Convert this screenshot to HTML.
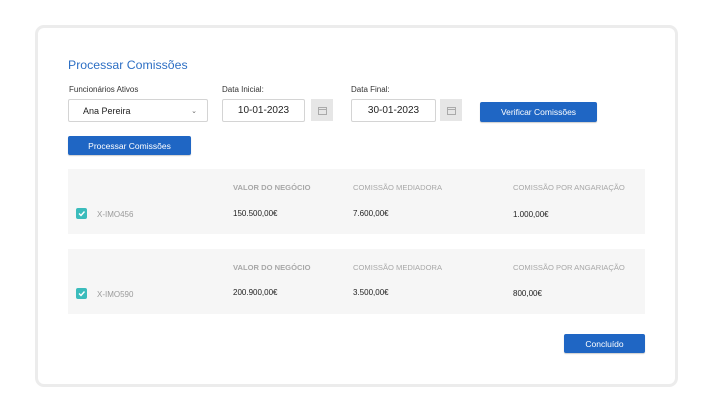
<html><head><style>
*{margin:0;padding:0;box-sizing:border-box}
body{width:713px;height:417px;background:#fff;font-family:"Liberation Sans",sans-serif;position:relative;overflow:hidden}
.a{position:absolute}
.card{left:35px;top:25px;width:643px;height:362px;border:3px solid #ececec;border-radius:9px}
.lbl{font-size:8px;color:#333}
.inp{background:#fff;border:1px solid #d4d4d4;border-radius:2px;font-size:10px;color:#222;display:flex;align-items:center}
.ic{background:#e6e6e6;display:flex;align-items:center;justify-content:center}
.btn{background:#1f66c4;color:#fff;font-size:8.5px;border-radius:2px;display:flex;align-items:center;justify-content:center;box-shadow:0 1px 1px rgba(0,0,0,.2)}
.row{background:#f6f6f6;left:68px;width:577px;height:65px}
.h{font-size:7.6px;color:#a8a8a8}
.v{font-size:8px;color:#222}
.cb{width:11px;height:11px;background:#3bbcbc;border-radius:2px}
.id{font-size:8px;color:#9a9a9a}
</style></head><body>
<div class="a card"></div>
<div class="a" style="left:68px;top:58px;font-size:12.3px;color:#2d6fc4">Processar Comissões</div>
<div class="a lbl" style="left:69px;top:85px">Funcionários Ativos</div>
<div class="a lbl" style="left:222px;top:85px">Data Inicial:</div>
<div class="a lbl" style="left:351px;top:85px">Data Final:</div>
<div class="a inp" style="left:68px;top:99px;width:140px;height:23px;padding-left:14px;font-size:9px">Ana Pereira<span style="position:absolute;right:10px;font-size:7px;color:#666">⌄</span></div>
<div class="a inp" style="left:222px;top:99px;width:83px;height:23px;justify-content:center">10-01-2023</div>
<div class="a ic" style="left:311px;top:99px;width:22px;height:22px"><svg width="9" height="9" viewBox="0 0 9 9"><rect x=".5" y="1.5" width="8" height="7" fill="none" stroke="#aaa"/><line x1="1" y1="3.5" x2="8" y2="3.5" stroke="#aaa"/></svg></div>
<div class="a inp" style="left:351px;top:99px;width:85px;height:23px;justify-content:center">30-01-2023</div>
<div class="a ic" style="left:440px;top:99px;width:22px;height:22px"><svg width="9" height="9" viewBox="0 0 9 9"><rect x=".5" y="1.5" width="8" height="7" fill="none" stroke="#aaa"/><line x1="1" y1="3.5" x2="8" y2="3.5" stroke="#aaa"/></svg></div>
<div class="a btn" style="left:480px;top:102px;width:117px;height:20px">Verificar Comissões</div>
<div class="a btn" style="left:68px;top:136px;width:123px;height:19px">Processar Comissões</div>

<div class="a row" style="top:169px"></div>
<div class="a h" style="left:233px;top:183px;font-weight:bold">VALOR DO NEGÓCIO</div>
<div class="a h" style="left:353px;top:183px">COMISSÃO MEDIADORA</div>
<div class="a h" style="left:513px;top:183px">COMISSÃO POR ANGARIAÇÃO</div>
<div class="a cb" style="left:76px;top:208px"><svg width="11" height="11"><path d="M3 5.5l2 2 3.5-4" stroke="#fff" stroke-width="1.4" fill="none"/></svg></div>
<div class="a id" style="left:97px;top:210px">X-IMO456</div>
<div class="a v" style="left:233px;top:209px">150.500,00€</div>
<div class="a v" style="left:353px;top:209px">7.600,00€</div>
<div class="a v" style="left:513px;top:210px">1.000,00€</div>

<div class="a row" style="top:249px"></div>
<div class="a h" style="left:233px;top:263px;font-weight:bold">VALOR DO NEGÓCIO</div>
<div class="a h" style="left:353px;top:263px">COMISSÃO MEDIADORA</div>
<div class="a h" style="left:513px;top:263px">COMISSÃO POR ANGARIAÇÃO</div>
<div class="a cb" style="left:76px;top:288px"><svg width="11" height="11"><path d="M3 5.5l2 2 3.5-4" stroke="#fff" stroke-width="1.4" fill="none"/></svg></div>
<div class="a id" style="left:97px;top:290px">X-IMO590</div>
<div class="a v" style="left:233px;top:288px">200.900,00€</div>
<div class="a v" style="left:353px;top:288px">3.500,00€</div>
<div class="a v" style="left:513px;top:289px">800,00€</div>

<div class="a btn" style="left:564px;top:334px;width:81px;height:19px">Concluído</div>
</body></html>
